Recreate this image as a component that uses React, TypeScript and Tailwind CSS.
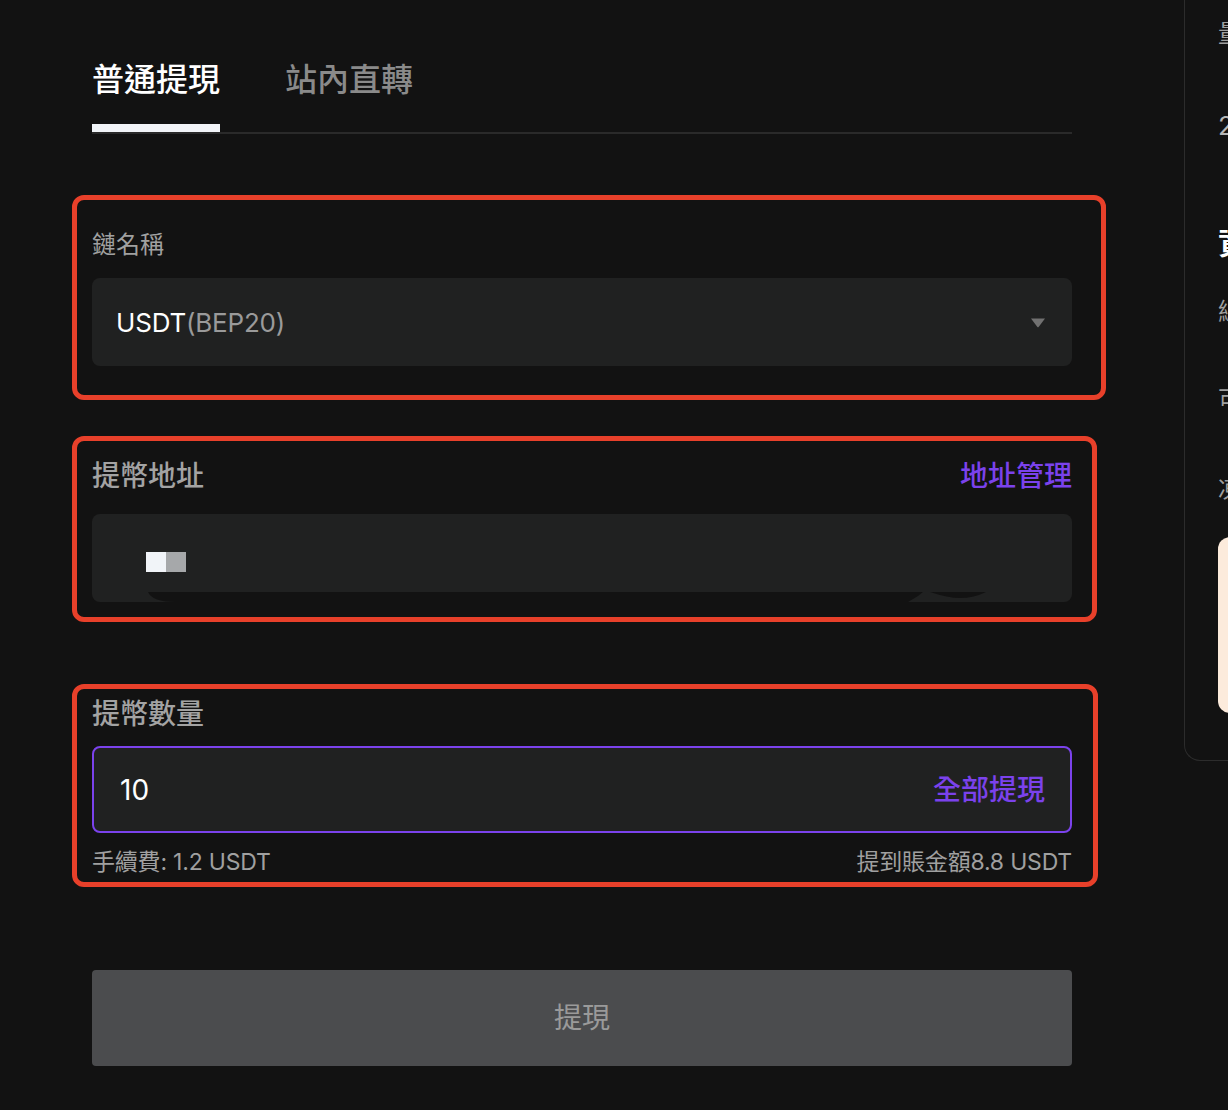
import { type JSX } from "react";

const font = "font-['Inter','Noto_Sans_CJK_TC',sans-serif]";

function Caret(): JSX.Element {
  return (
    <svg width="16" height="11" viewBox="0 0 16 11" className="shrink-0">
      <path d="M1 1.5 L15 1.5 L8.6 10 Q8 10.6 7.4 10 Z" fill="#717171" />
    </svg>
  );
}

export default function App(): JSX.Element {
  return (
    <div className={`${font} flex w-[1228px] h-[1110px] overflow-hidden bg-[#121212]`}>
      {/* Main column */}
      <div className="w-[1106px] shrink-0 pl-[72px]">
        {/* Tabs */}
        <div className="ml-[20px] w-[980px] pt-[56px] flex gap-[65px] border-b-2 border-[#2a2a2a]">
          <div className="flex flex-col w-[128px]">
            <span className="text-[32px] leading-[48px] font-medium text-white whitespace-nowrap">普通提現</span>
            <div className="mt-[20px] h-[8px] bg-[#f1f4f8]" />
          </div>
          <div className="flex flex-col">
            <span className="text-[32px] leading-[48px] font-medium text-[#8a8a8a] whitespace-nowrap">站內直轉</span>
            <div className="mt-[20px] h-[8px]" />
          </div>
        </div>

        {/* Chain */}
        <div className="mt-[61px] w-[1034px] border-[5px] border-[#e8402a] rounded-[12px] pl-[15px] pr-[29px] pt-[29px] pb-[29px]">
          <div className="text-[24px] leading-[32px] text-[#a0a0a0]">鏈名稱</div>
          <div className="mt-[17px] h-[88px] rounded-[8px] bg-[#202121] flex items-center justify-between pl-[24px] pr-[26px]">
            <span className="text-[26px] text-white tracking-[-0.2px]">
              USDT<span className="text-[#9a9a9a]">(BEP20)</span>
            </span>
            <Caret />
          </div>
        </div>

        {/* Address */}
        <div className="mt-[36px] w-[1025px] border-[5px] border-[#e8402a] rounded-[12px] pl-[15px] pr-[20px] pt-[17px] pb-[15px]">
          <div className="flex items-center justify-between text-[28px] leading-[36px]">
            <span className="text-[#a3a3a3] font-medium">提幣地址</span>
            <span className="text-[#7b42ec] font-medium">地址管理</span>
          </div>
          <div className="relative mt-[20px] h-[88px] rounded-[8px] bg-[#202121] flex items-center pl-[54px]">
            <div className="flex mt-[8px]">
              <div className="w-[20px] h-[20px] bg-[#f1f4f8]" />
              <div className="w-[20px] h-[20px] bg-[#a6a8aa]" />
            </div>
            <svg className="absolute left-[56px] bottom-0" width="840" height="10" viewBox="0 0 840 10">
              <path d="M0 0 L775 0 L770 4 L760 10 L28 10 Q4 10 0 0 Z" fill="#121212" />
              <path d="M782 0 L838 0 Q826 6 812 6 Q800 6 782 0 Z" fill="#121212" />
            </svg>
          </div>
        </div>

        {/* Amount */}
        <div className="mt-[62px] w-[1026px] border-[5px] border-[#e8402a] rounded-[12px] pl-[15px] pr-[21px] pt-[7px] pb-[4px]">
          <div className="text-[28px] leading-[36px] text-[#a3a3a3] font-medium">提幣數量</div>
          <div className="mt-[14px] h-[87px] rounded-[8px] border-2 border-[#7b42ec] bg-[#202121] flex items-center justify-between pl-[26px] pr-[25px]">
            <span className="text-[28px] text-white">10</span>
            <span className="text-[28px] text-[#7b42ec] font-medium">全部提現</span>
          </div>
          <div className="mt-[13px] flex justify-between text-[23px] leading-[32px] text-[#a0a0a0] tracking-[-0.2px]">
            <span>手續費: 1.2 USDT</span>
            <span>提到賬金額8.8 USDT</span>
          </div>
        </div>

        {/* Submit */}
        <button className="mt-[83px] ml-[20px] w-[980px] h-[96px] rounded-[4px] bg-[#4b4c4e] text-[28px] text-[#9a9a9a]">
          提現
        </button>
      </div>

      {/* Side panel */}
      <div className="ml-[78px] w-[320px] h-[761px] shrink-0 border-l border-b border-[#2c2c2c] rounded-bl-[16px] pl-[33px] pt-[18px] flex flex-col">
        <span className="text-[24px] leading-[32px] text-[#a0a0a0] whitespace-nowrap">量</span>
        <span className="mt-[60px] text-[26px] leading-[32px] text-[#b5b5b5] whitespace-nowrap">2 USDT</span>
        <span className="mt-[83px] text-[30px] leading-[36px] font-bold text-white whitespace-nowrap">資產</span>
        <span className="mt-[35px] text-[24px] leading-[32px] text-[#a0a0a0] whitespace-nowrap">總資產</span>
        <span className="mt-[56px] text-[24px] leading-[32px] text-[#a0a0a0] whitespace-nowrap">可用</span>
        <span className="mt-[58px] text-[24px] leading-[32px] text-[#a0a0a0] whitespace-nowrap">凍結</span>
        <div className="mt-[31px] h-[176px] rounded-[12px] bg-[#fcebdc]" />
      </div>
    </div>
  );
}
